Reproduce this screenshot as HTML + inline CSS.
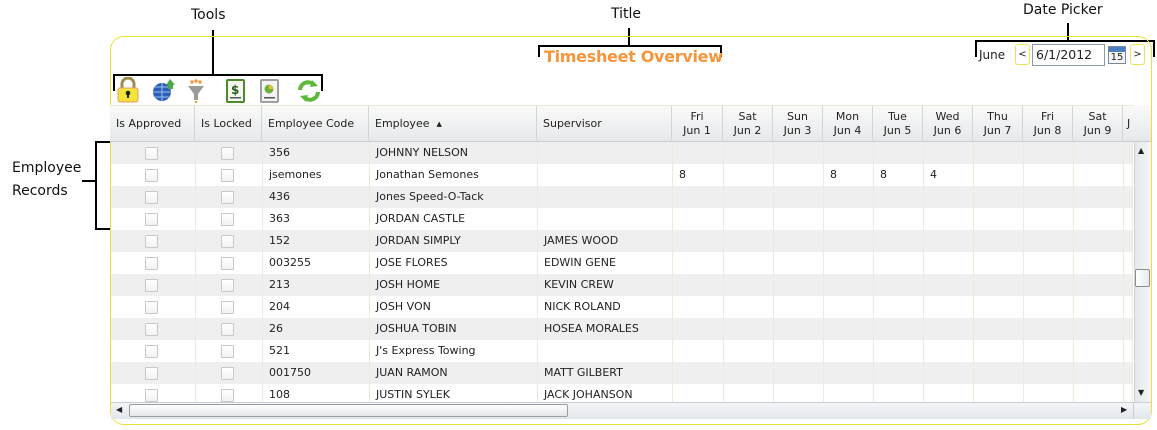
<!DOCTYPE html>
<html><head><meta charset="utf-8"><style>
*{margin:0;padding:0;box-sizing:border-box}
body{width:1157px;height:430px;background:#fff;position:relative;overflow:hidden;font-family:"DejaVu Sans","Liberation Sans",sans-serif;font-size:11px;color:#222}
.a{position:absolute}
.lbl{font-size:14px;color:#111;font-family:"DejaVu Sans",sans-serif}
.bk{background:#000}
.panel{left:110px;top:36px;width:1042px;height:389px;border:1px solid #e6e23a;border-radius:14px}
.hdr{left:110px;top:105px;width:1024px;height:37px;background:linear-gradient(#fafafa,#e6e8ea);border-bottom:1px solid #c9cdd1;border-top:1px solid #e8ecd8}
.hc{position:absolute;top:0;height:36px;border-right:1px solid #d2d5d8;font-size:11px;display:flex;align-items:center;padding-left:6px;line-height:14px}
.hc.c{justify-content:center;text-align:center;padding-left:0}
.row{position:absolute;left:111px;width:1022px;height:22px}
.cell{position:absolute;top:0;height:22px;border-right:1px solid #e9ecd9;line-height:22px;padding-left:6px;white-space:nowrap;font-size:11px}
.cb{position:absolute;top:5px;width:13px;height:13px;border:1px solid #c8c8c8;background:linear-gradient(#fff,#f2f2f2);border-radius:1px}
</style></head><body>

<div class="a lbl" style="left:191px;top:7px">Tools</div>
<div class="a bk" style="left:212px;top:30px;width:2px;height:45px"></div>
<div class="a bk" style="left:113px;top:74px;width:210px;height:2px"></div>
<div class="a bk" style="left:113px;top:74px;width:2px;height:17px"></div>
<div class="a bk" style="left:321px;top:74px;width:2px;height:17px"></div>

<div class="a lbl" style="left:611px;top:6px">Title</div>
<div class="a bk" style="left:628px;top:28px;width:2px;height:18px"></div>
<div class="a bk" style="left:538px;top:45px;width:184px;height:2px"></div>
<div class="a bk" style="left:538px;top:45px;width:2px;height:12px"></div>
<div class="a bk" style="left:720px;top:45px;width:2px;height:12px"></div>

<div class="a lbl" style="left:1023px;top:2px">Date Picker</div>
<div class="a bk" style="left:1067px;top:23px;width:2px;height:18px"></div>
<div class="a bk" style="left:975px;top:40px;width:180px;height:2px"></div>
<div class="a bk" style="left:975px;top:40px;width:2px;height:17px"></div>
<div class="a bk" style="left:1153px;top:40px;width:2px;height:17px"></div>

<div class="a lbl" style="left:12px;top:157px;line-height:23px">Employee<br>Records</div>
<div class="a bk" style="left:95px;top:141px;width:2px;height:89px"></div>
<div class="a bk" style="left:95px;top:141px;width:15px;height:2px"></div>
<div class="a bk" style="left:95px;top:228px;width:15px;height:2px"></div>
<div class="a bk" style="left:82px;top:180px;width:14px;height:2px"></div>

<div class="a panel"></div>

<div class="a" style="left:544px;top:47px;color:#f7953a;font-weight:bold;font-size:16px;font-family:'DejaVu Sans',sans-serif;letter-spacing:-0.3px">Timesheet Overview</div>

<div class="a" style="left:979px;top:48px;font-size:12px">June</div>
<div class="a" style="left:1015px;top:44px;width:15px;height:21px;border:1px solid #e8e45a;border-radius:3px;font-size:10px;text-align:center;line-height:19px">&lt;</div>
<div class="a" style="left:1032px;top:44px;width:73px;height:22px;border:1px solid #8a9aa8;font-size:12.5px;padding-left:3px;line-height:20px">6/1/2012</div>
<div class="a" style="left:1108px;top:46px;width:18px;height:18px;border:1px solid #7a8a9a;background:#f4f4f4">
 <div style="height:5px;background:#4b7fc0"></div><div style="font-size:10px;text-align:center;line-height:12px">15</div></div>
<div class="a" style="left:1130px;top:44px;width:15px;height:21px;border:1px solid #e8e45a;border-radius:3px;font-size:10px;text-align:center;line-height:19px">&gt;</div>

<svg class="a" style="left:116px;top:77px" width="212" height="26" viewBox="0 0 212 26">
 <path d="M6 12 V7 a6 6 0 0 1 12 0 V12" fill="none" stroke="#a08a50" stroke-width="3"/>
 <rect x="2" y="11" width="20" height="14" rx="2" fill="#f3e53a" stroke="#e89a6a"/>
 <circle cx="12" cy="16" r="2.3" fill="#222"/><rect x="11" y="16" width="2" height="5" fill="#222"/>
 <circle cx="46" cy="15" r="9" fill="#2d5fb8"/><path d="M37 15h18M46 6v18M39 10h14M39 20h14" stroke="#9cc0ec" stroke-width="1"/>
 <path d="M50 8 l4 -6 l5 6 h-2 v4 h-5 v-4z" fill="#4aa84a"/>
 <path d="M72 9 h16 l-6 8 v6 h-4 v-6z" fill="#9a9a9a"/><circle cx="76" cy="5" r="1.7" fill="#f7953a"/><circle cx="80" cy="4" r="1.7" fill="#f7953a"/><circle cx="84" cy="5" r="1.7" fill="#f7953a"/><circle cx="80" cy="25" r="1.3" fill="#f7953a"/>
 <rect x="111" y="3" width="17" height="22" rx="1" fill="#f6f6f0" stroke="#4d8a2d" stroke-width="2"/><text x="115" y="17" font-size="12" font-weight="bold" fill="#2d5a1d" font-family="DejaVu Sans">$</text><rect x="114" y="20" width="11" height="1.5" fill="#555"/>
 <rect x="145" y="3" width="17" height="22" rx="1" fill="#f4f4f4" stroke="#a0a0a0" stroke-width="2"/><circle cx="153" cy="12" r="4.5" fill="#6bb33a"/><path d="M153 12 V7.5 a4.5 4.5 0 0 1 4.5 4.5z" fill="#f0c030"/><rect x="148" y="20" width="11" height="1.5" fill="#555"/>
 <path d="M184 13 a8 8 0 0 1 14 -5" fill="none" stroke="#5cb83a" stroke-width="4"/><path d="M196 3 l6 6 l-8 1z" fill="#5cb83a"/>
 <path d="M202 15 a8 8 0 0 1 -14 5" fill="none" stroke="#5cb83a" stroke-width="4"/><path d="M190 25 l-6 -6 l8 -1z" fill="#5cb83a"/>
</svg>

<div class="a hdr">
 <div class="hc" style="left:0;width:85px">Is Approved</div>
 <div class="hc" style="left:85px;width:67px">Is Locked</div>
 <div class="hc" style="left:152px;width:107px">Employee Code</div>
 <div class="hc" style="left:259px;width:168px">Employee&nbsp;&nbsp;<span style="font-size:7px">▲</span></div>
 <div class="hc" style="left:427px;width:135px">Supervisor</div>
 <div class="hc c" style="left:562px;width:51px">Fri<br>Jun 1</div>
 <div class="hc c" style="left:613px;width:50px">Sat<br>Jun 2</div>
 <div class="hc c" style="left:663px;width:50px">Sun<br>Jun 3</div>
 <div class="hc c" style="left:713px;width:50px">Mon<br>Jun 4</div>
 <div class="hc c" style="left:763px;width:50px">Tue<br>Jun 5</div>
 <div class="hc c" style="left:813px;width:50px">Wed<br>Jun 6</div>
 <div class="hc c" style="left:863px;width:50px">Thu<br>Jun 7</div>
 <div class="hc c" style="left:913px;width:50px">Fri<br>Jun 8</div>
 <div class="hc c" style="left:963px;width:50px">Sat<br>Jun 9</div>
 <div class="hc" style="left:1013px;width:11px;padding-left:4px;border-right:none">J</div>
</div>
<div class="a" style="left:1134px;top:105px;width:17px;height:37px;background:linear-gradient(#fafafa,#e6e8ea);border-bottom:1px solid #c9cdd1"></div>

<div id="rows"></div>
<script>
var d=[["356","JOHNNY NELSON",""],["jsemones","Jonathan Semones","",["8","","","8","8","4"]],["436","Jones Speed-O-Tack",""],["363","JORDAN CASTLE",""],["152","JORDAN SIMPLY","JAMES WOOD"],["003255","JOSE FLORES","EDWIN GENE"],["213","JOSH HOME","KEVIN CREW"],["204","JOSH VON","NICK ROLAND"],["26","JOSHUA TOBIN","HOSEA MORALES"],["521","J's Express Towing",""],["001750","JUAN RAMON","MATT GILBERT"],["108","JUSTIN SYLEK","JACK JOHANSON"]];
var cols=[[0,85],[85,67],[152,107],[259,168],[427,135],[562,51],[613,50],[663,50],[713,50],[763,50],[813,50],[863,50],[913,50],[963,50],[1013,9]];
var h="";
d.forEach(function(r,i){
 var top=142+i*22, hh=(i==11?18:22);
 h+='<div class="row" style="top:'+top+'px;height:'+hh+'px;overflow:hidden;background:'+(i%2?'#fff':'#efefef')+'">';
 cols.forEach(function(c,j){
  var t="";
  if(j==2)t=r[0];else if(j==3)t=r[1];else if(j==4)t=r[2];else if(j>=5&&r[3]&&r[3][j-5])t=r[3][j-5];
  h+='<div class="cell" style="left:'+c[0]+'px;width:'+c[1]+'px">'+t+'</div>';
 });
 h+='<div class="cb" style="left:34px"></div><div class="cb" style="left:110px"></div></div>';
});
document.getElementById("rows").innerHTML=h;
</script>

<div class="a" style="left:1134px;top:142px;width:17px;height:260px;background:linear-gradient(90deg,#e4e8ec,#f4f6f8);border-left:1px solid #d0d4d8"></div>
<div class="a" style="left:1138px;top:146px;font-size:8px">▲</div>
<div class="a" style="left:1138px;top:388px;font-size:8px">▼</div>
<div class="a" style="left:1135px;top:269px;width:15px;height:18px;border:1px solid #8a8e92;border-radius:2px;background:linear-gradient(90deg,#fff,#e8eaec)"></div>

<div class="a" style="left:111px;top:402px;width:1040px;height:17px;background:linear-gradient(#f4f6f8,#e2e6ea);border-top:1px solid #c9cdd1"></div>
<div class="a" style="left:116px;top:405px;font-size:8px">◀</div>
<div class="a" style="left:1121px;top:405px;font-size:8px">▶</div>
<div class="a" style="left:129px;top:404px;width:439px;height:13px;border:1px solid #9a9ea2;border-radius:2px;background:linear-gradient(#fff,#e4e6e8)"></div>
<div class="a" style="left:1133px;top:402px;width:1px;height:17px;background:#c9cdd1"></div>
</body></html>
